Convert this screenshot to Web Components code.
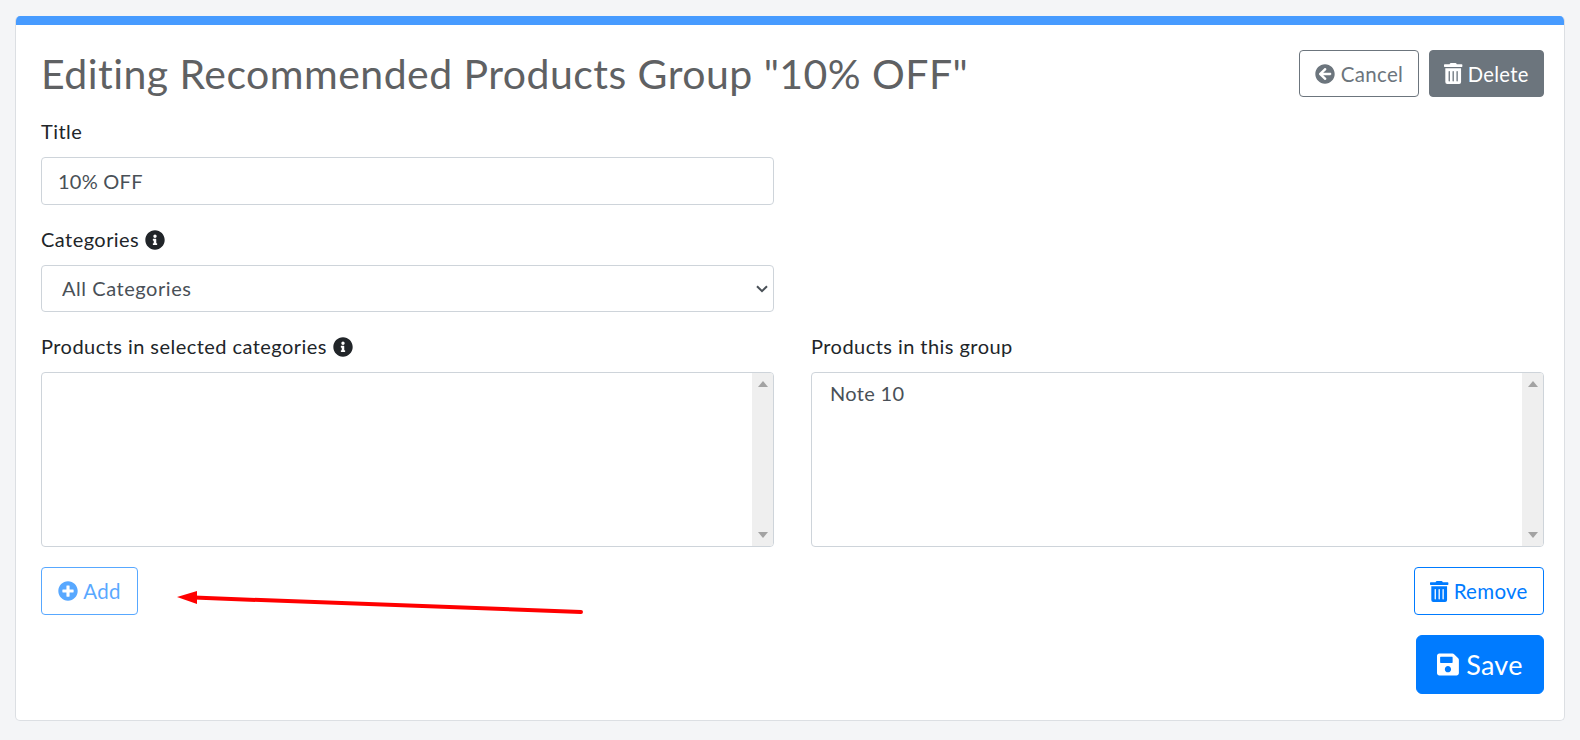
<!DOCTYPE html>
<html><head><meta charset="utf-8">
<style>
html,body{margin:0;padding:0;background:#f4f5f7;}
body{font-family:"Lato","Noto Sans",sans-serif;color:#212529;height:740px;overflow:hidden;}
</style></head><body>
<edit-page>
  <group-card>
    <page-head slot="head" title-text="Editing Recommended Products Group &quot;10% OFF&quot;">
      <ui-btn variant="cancel" icon="back">Cancel</ui-btn>
      <ui-btn variant="delete" icon="trash">Delete</ui-btn>
    </page-head>
    <form-field label="Title" style="width:733px;height:108px">
      <text-box value="10% OFF"></text-box>
    </form-field>
    <form-field label="Categories" info style="width:733px;height:107px">
      <cat-select></cat-select>
    </form-field>
    <dual-lists>
      <form-field slot="a" label="Products in selected categories" info><list-box></list-box></form-field>
      <form-field slot="b" label="Products in this group"><list-box>Note 10</list-box></form-field>
      <ui-btn slot="c" variant="add" icon="plus">Add</ui-btn>
      <ui-btn slot="d" variant="remove" icon="trash">Remove</ui-btn>
    </dual-lists>
    <save-row><ui-btn variant="save" icon="save">Save</ui-btn></save-row>
  </group-card>
  <red-arrow></red-arrow>
</edit-page>
<script>
const P={
 info:['0 0 512 512','M256 8C119.043 8 8 119.083 8 256c0 136.997 111.043 248 248 248s248-111.003 248-248C504 119.083 392.957 8 256 8zm0 110c23.196 0 42 18.804 42 42s-18.804 42-42 42-42-18.804-42-42 18.804-42 42-42zm56 254c0 6.627-5.373 12-12 12h-88c-6.627 0-12-5.373-12-12v-24c0-6.627 5.373-12 12-12h12v-64h-12c-6.627 0-12-5.373-12-12v-24c0-6.627 5.373-12 12-12h64c6.627 0 12 5.373 12 12v100h12c6.627 0 12 5.373 12 12v24z'],
 back:['0 0 512 512','M256 504C119 504 8 393 8 256S119 8 256 8s248 111 248 248-111 248-248 248zm28.9-143.6L209.4 288H392c13.3 0 24-10.7 24-24v-16c0-13.3-10.7-24-24-24H209.4l75.5-72.4c9.7-9.3 9.9-24.8.4-34.3l-11-10.9c-9.4-9.4-24.6-9.4-33.9 0L107.7 239c-9.4 9.4-9.4 24.6 0 33.9l132.7 132.7c9.4 9.4 24.6 9.4 33.9 0l11-10.9c9.5-9.5 9.3-25-.4-34.3z'],
 plus:['0 0 512 512','M256 8C119 8 8 119 8 256s111 248 248 248 248-111 248-248S393 8 256 8zm144 276c0 6.6-5.4 12-12 12h-92v92c0 6.6-5.4 12-12 12h-56c-6.6 0-12-5.4-12-12v-92h-92c-6.6 0-12-5.4-12-12v-56c0-6.6 5.4-12 12-12h92v-92c0-6.6 5.4-12 12-12h56c6.6 0 12 5.4 12 12v92h92c6.6 0 12 5.4 12 12v56z'],
 save:['0 0 448 512','M433.941 129.941l-83.882-83.882A48 48 0 0 0 316.118 32H48C21.49 32 0 53.49 0 80v352c0 26.51 21.49 48 48 48h352c26.51 0 48-21.49 48-48V163.882a48 48 0 0 0-14.059-33.941zM224 416c-35.346 0-64-28.654-64-64 0-35.346 28.654-64 64-64s64 28.654 64 64c0 35.346-28.654 64-64 64zm96-304.520V212c0 6.627-5.373 12-12 12H76c-6.627 0-12-5.373-12-12V108c0-6.627 5.373-12 12-12h228.520c3.183 0 6.235 1.264 8.485 3.515l3.48 3.48A11.996 11.996 0 0 1 320 111.480z'],
 trash:['0 0 448 512','M32 464a48 48 0 0 0 48 48h288a48 48 0 0 0 48-48V128H32zm272-256a16 16 0 0 1 32 0v224a16 16 0 0 1-32 0zm-96 0a16 16 0 0 1 32 0v224a16 16 0 0 1-32 0zm-96 0a16 16 0 0 1 32 0v224a16 16 0 0 1-32 0zM432 32H312l-9.4-18.7A24 24 0 0 0 281.1 0H166.8a23.72 23.72 0 0 0-21.4 13.3L136 32H16A16 16 0 0 0 0 48v32a16 16 0 0 0 16 16h416a16 16 0 0 0 16-16V48a16 16 0 0 0-16-16z']
};
const svg=(n,s)=>`<svg viewBox="${P[n][0]}" style="height:${s}px;width:auto;display:block;flex:none" fill="currentColor"><path d="${P[n][1]}"/></svg>`;
class Base extends HTMLElement{
  constructor(){super();this.attachShadow({mode:'open'});}
  connectedCallback(){this.shadowRoot.innerHTML=this.render();}
}
customElements.define('edit-page',class extends Base{render(){return `<style>:host{display:block;position:relative;padding:16px 15px 0 15px;}</style><slot></slot>`}});
customElements.define('group-card',class extends Base{render(){return `<style>
:host{display:block;box-sizing:border-box;width:1550px;height:705px;background:#fff;border:1px solid #dcdfe3;border-top:0;border-radius:5px;overflow:hidden;}
.bar{height:9px;background:#479bff;margin:0 -1px}
.body{padding:25px 20px 0 25px}
</style><div class="bar"></div><div class="body"><slot name="head"></slot><slot></slot></div>`}});
customElements.define('page-head',class extends Base{render(){return `<style>
:host{display:flex;justify-content:space-between;align-items:flex-start;height:70px}
h1{margin:0;font-weight:400;font-size:41px;line-height:48px;color:#5f6163;letter-spacing:.46px}
.b{display:flex;gap:10px}
</style><h1>${this.getAttribute('title-text').replace(/"/g,'&quot;')}</h1><div class="b"><slot></slot></div>`}});
customElements.define('ui-btn',class extends Base{render(){
 const v=this.getAttribute('variant');
 const m={cancel:[120,47,'#6c757d','#fff','#6c757d',20,20.5],delete:[115,47,'#fff','#6c757d','#6c757d',21,20.2],add:[97,48,'#007bff','#fff','#007bff',20,20.5],remove:[130,48,'#007bff','#fff','#007bff',21,20.5],save:[128,59,'#fff','#007bff','#007bff',25,27]}[v];
 return `<style>
:host{display:inline-flex;box-sizing:border-box;width:${m[0]}px;height:${m[1]}px;align-items:center;justify-content:center;gap:${v=='save'?7:v=='cancel'?6:5}px;color:${m[2]};background:${m[3]};border:1px solid ${m[4]};border-radius:${v=='save'?6:4}px;font-size:${m[6]}px;letter-spacing:.3px;opacity:${v=='add'?.65:1};}
</style>${svg(this.getAttribute('icon'),m[5])}<slot></slot>`}});
customElements.define('form-field',class extends Base{render(){return `<style>
:host{display:block}
label{display:flex;align-items:center;gap:6px;height:23px;font-size:20px;line-height:23px;margin-bottom:14px;color:#212529;letter-spacing:.45px}
</style><label>${this.getAttribute('label')}${this.hasAttribute('info')?svg('info',20):''}</label><slot></slot>`}});
customElements.define('text-box',class extends Base{render(){return `<style>
:host{display:block}
input{display:block;box-sizing:border-box;width:100%;height:48px;border:1px solid #ced4da;border-radius:4px;padding:0 16px;font:inherit;font-size:20px;letter-spacing:.25px;color:#495057;background:#fff;outline:0}
</style><input value="${this.getAttribute('value')}">`}});
customElements.define('cat-select',class extends Base{render(){return `<style>
:host{display:block;position:relative}
select{display:block;box-sizing:border-box;width:100%;height:47px;border:1px solid #ced4da;border-radius:4px;padding:0 20px 2px;font:inherit;font-size:20px;letter-spacing:.55px;color:#495057;background:#fff;outline:0;appearance:none;-webkit-appearance:none}
svg{position:absolute;right:6px;top:20px;pointer-events:none}
</style><select><option>All Categories</option></select><svg width="12" height="8" viewBox="0 0 12 8"><path d="M1 1.2L6 6.2L11 1.2" fill="none" stroke="#495057" stroke-width="2"/></svg>`}});
customElements.define('list-box',class extends Base{render(){return `<style>
:host{display:flex;box-sizing:border-box;height:175px;border:1px solid #ced4da;border-radius:4px;overflow:hidden;background:#fff;color:#495057;font-size:20px;letter-spacing:.33px}
.c{flex:1;padding:8px 18px;line-height:24px}
.s{width:21px;background:#efefef;display:flex;flex-direction:column;justify-content:space-between;align-items:center;padding:8px 0 8px}
.u,.d{width:0;height:0;border-left:5.5px solid transparent;border-right:5.5px solid transparent}
.u{border-bottom:6px solid #a3a3a3}.d{border-top:6px solid #a3a3a3}
</style><div class="c"><slot></slot></div><div class="s"><div class="u"></div><div class="d"></div></div>`}});
customElements.define('dual-lists',class extends Base{render(){return `<style>
:host{display:grid;grid-template-columns:733px 733px;column-gap:37px;row-gap:20px}
.r{justify-self:end}
</style><slot name="a"></slot><slot name="b"></slot><div><slot name="c"></slot></div><div class="r"><slot name="d"></slot></div>`}});
customElements.define('save-row',class extends Base{render(){return `<style>:host{display:flex;justify-content:flex-end;margin-top:20px}</style><slot></slot>`}});
customElements.define('red-arrow',class extends Base{render(){return `<style>:host{position:absolute;left:0;top:0;width:1580px;height:740px;pointer-events:none}</style>
<svg width="1580" height="740" style="display:block"><path d="M194 597.6L581 612" stroke="#f00" stroke-width="4" stroke-linecap="round" fill="none"/><path d="M177 597L197 591V604Z" fill="#f00"/></svg>`}});
</script>
</body></html>
